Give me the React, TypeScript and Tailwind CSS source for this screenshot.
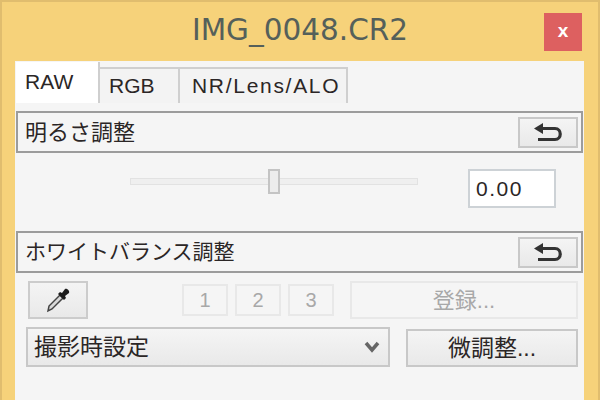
function ResetButton() {
  return (
    <button className="w-[60px] h-[31px] border-2 border-[#c8c8c8] bg-gradient-to-b from-[#f4f4f4] to-[#e9e9e9] flex items-center justify-center">
      <svg width="29" height="19" viewBox="0 0 29 19" fill="none">
        <path d="M0 5.5 L9 0 L9 11 Z" fill="#333" />
        <path d="M7 5.5 H21 C28 5.5 28 16.5 21 16.5 H4" stroke="#333" strokeWidth="3.2" />
      </svg>
    </button>
  );
}

function GroupHeader({ title, size }: { title: string; size: string }) {
  return (
    <div className="h-[42px] mx-px border-2 border-[#9c9c9c] bg-[#f5f5f5] flex items-center justify-between pl-[7px] pr-[3px]">
      <span className={`${size} text-[#2b2626]`}>{title}</span>
      <ResetButton />
    </div>
  );
}

function NumButton({ label }: { label: string }) {
  return (
    <div className="w-[46px] h-[32px] border-2 border-[#e8e8e8] flex items-center justify-center text-[20px] text-[#a8a8a8]">
      {label}
    </div>
  );
}

export default function App() {
  return (
    <div className="w-[600px] h-[400px] overflow-hidden bg-[#f6d27a] border-t-2 border-x-2 border-[#e0bd6e] flex flex-col font-['Liberation_Sans','Noto_Sans_CJK_JP',sans-serif]">
      {/* Title bar */}
      <div className="h-[59px] flex items-center shrink-0 px-[16px]">
        <div className="flex-1 text-center pl-[38px] pb-[2px] text-[29.5px] text-[#55605a] font-['DejaVu_Sans',sans-serif]">
          IMG_0048.CR2
        </div>
        <div className="w-[38px] h-[38px] bg-[#dd6060] flex items-center justify-center text-white text-[19px] font-bold">
          x
        </div>
      </div>

      {/* Window body */}
      <div className="flex-1 flex flex-col ml-[13px] mr-[14px] bg-[#f5f5f5]">
        {/* Tabs */}
        <div className="flex h-[42px] pl-px items-end shrink-0">
          <div className="w-[84px] h-[41px] bg-white flex items-center pl-[9px] pb-[2px] text-[21px] text-[#2b2626] border-r-2 border-[#cfcfcf]">
            RAW
          </div>
          <div className="w-[80px] h-[36px] bg-[#f3f3f3] flex items-center pl-[9px] text-[21px] text-[#2b2626] border-t-2 border-r-2 border-[#cfcfcf]">
            RGB
          </div>
          <div className="w-[168px] h-[36px] bg-[#f3f3f3] flex items-center pl-[12px] text-[21px] tracking-[1.7px] text-[#2b2626] border-t-2 border-r-2 border-[#cfcfcf]">
            NR/Lens/ALO
          </div>
        </div>

        <div className="h-[8px] shrink-0" />
        <GroupHeader title="明るさ調整" size="text-[22px]" />

        {/* Brightness slider */}
        <div className="h-[78px] shrink-0 relative flex pt-[16px] pl-[115px]">
          <div className="w-[288px] h-[25px] flex items-center relative">
            <div className="w-full h-[7px] bg-[#efefef] border border-[#e2e2e2]" />
            <div className="absolute left-[138px] top-0 w-[12px] h-[25px] bg-[#ececec] border-2 border-[#c4c4c4]" />
          </div>
          <div className="ml-[50px] w-[88px] h-[39px] bg-white border-2 border-[#cdd2d6] flex items-center pl-[6px] text-[21px] tracking-[1.5px] text-[#2b2626]">
            0.00
          </div>
        </div>

        <GroupHeader title="ホワイトバランス調整" size="text-[21px]" />

        {/* White balance controls */}
        <div className="flex items-center pt-[8px] pl-[13px]">
          <button className="w-[60px] h-[38px] border-2 border-[#cccccc] bg-gradient-to-b from-[#f4f4f4] to-[#e9e9e9] flex items-center justify-center">
            <svg width="28" height="28" viewBox="0 0 28 28" fill="none">
              <path d="M4 25 L5 20 L16 9 L19 12 L8 23 Z" fill="#d8d8d8" stroke="#444" strokeWidth="1.5" />
              <path d="M14 8 L20 14 L22 12 L21 10 L25 7 C26 5 23 2 21 3 L18 7 L16 6 Z" fill="#1c1c1c" />
            </svg>
          </button>
          <div className="flex ml-[94px] gap-[7px]">
            <NumButton label="1" />
            <NumButton label="2" />
            <NumButton label="3" />
          </div>
          <div className="ml-[16px] w-[228px] h-[38px] border-2 border-[#e8e8e8] flex items-center justify-center text-[22px] text-[#a8a8a8]">
            登録...
          </div>
        </div>

        <div className="flex items-end mt-[8px] pl-[11px]">
          <div className="w-[364px] h-[40px] border-2 border-[#c8c8c8] bg-gradient-to-b from-[#f5f5f5] to-[#e9e9e9] flex items-center justify-between pl-[6px] pr-[8px] text-[23px] text-[#2b2626]">
            <span>撮影時設定</span>
            <svg width="16" height="12" viewBox="0 0 16 12" fill="none">
              <path d="M2 2 L8 9 L14 2" stroke="#666" strokeWidth="3.5" />
            </svg>
          </div>
          <button className="ml-[16px] w-[172px] h-[38px] border-2 border-[#c8c8c8] bg-gradient-to-b from-[#f4f4f4] to-[#e9e9e9] flex items-center justify-center text-[23px] text-[#2b2626]">
            微調整...
          </button>
        </div>
      </div>
    </div>
  );
}
